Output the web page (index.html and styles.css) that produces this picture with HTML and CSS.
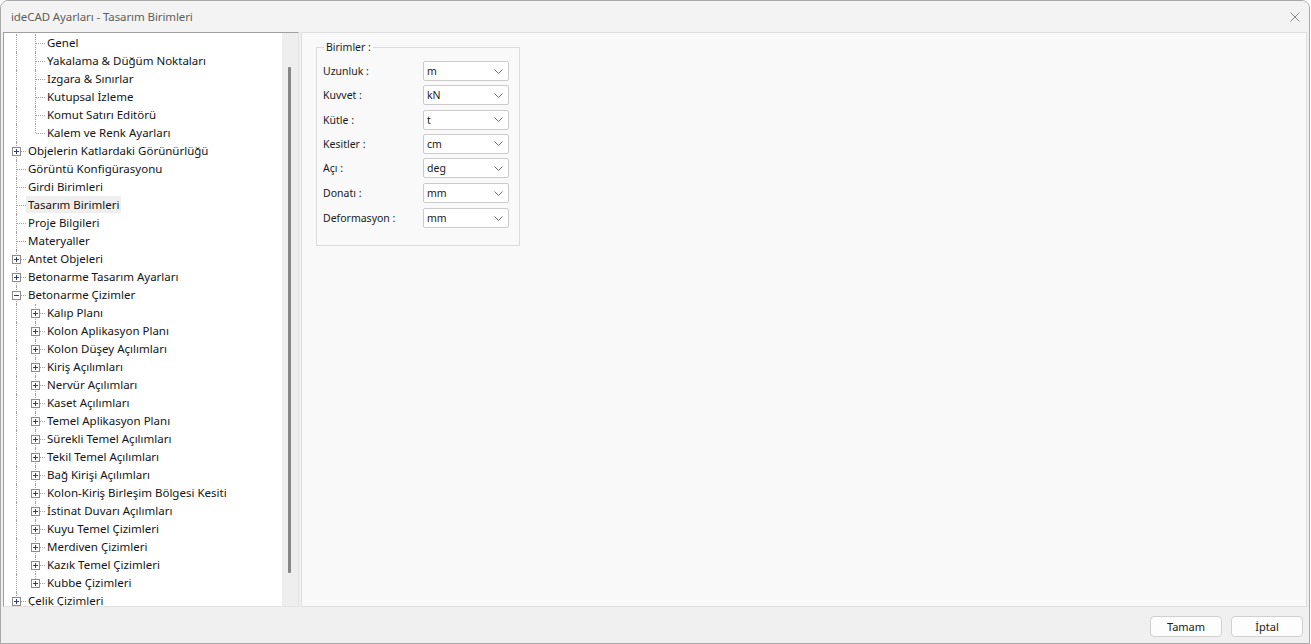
FILE: index.html
```html
<!DOCTYPE html>
<html lang="tr">
<head>
<meta charset="utf-8">
<title>ideCAD Ayarları - Tasarım Birimleri</title>
<link rel="stylesheet" href="styles.css">
</head>
<body>
<div class="window">
  <div class="titlebar">
    <span class="title">ideCAD Ayarları - Tasarım Birimleri</span>
    <svg class="close" width="10" height="10" viewBox="0 0 10 10"><path d="M0.5 0.5 L9.5 9.5 M9.5 0.5 L0.5 9.5" stroke="#8a8a8a" stroke-width="1"/></svg>
  </div>
  <div class="main">
    <div class="treepanel">
      <div class="tree">
        <div class="row"><span class="g v"></span><span class="g t"></span><span class="lbl">Genel</span></div>
        <div class="row"><span class="g v"></span><span class="g t"></span><span class="lbl">Yakalama &amp; Düğüm Noktaları</span></div>
        <div class="row"><span class="g v"></span><span class="g t"></span><span class="lbl">Izgara &amp; Sınırlar</span></div>
        <div class="row"><span class="g v"></span><span class="g t"></span><span class="lbl">Kutupsal İzleme</span></div>
        <div class="row"><span class="g v"></span><span class="g t"></span><span class="lbl">Komut Satırı Editörü</span></div>
        <div class="row"><span class="g v"></span><span class="g t end"></span><span class="lbl">Kalem ve Renk Ayarları</span></div>
        <div class="row"><span class="g t"><i class="box plus"></i></span><span class="lbl">Objelerin Katlardaki Görünürlüğü</span></div>
        <div class="row"><span class="g t"></span><span class="lbl">Görüntü Konfigürasyonu</span></div>
        <div class="row"><span class="g t"></span><span class="lbl">Girdi Birimleri</span></div>
        <div class="row"><span class="g t"></span><span class="lbl sel">Tasarım Birimleri</span></div>
        <div class="row"><span class="g t"></span><span class="lbl">Proje Bilgileri</span></div>
        <div class="row"><span class="g t"></span><span class="lbl">Materyaller</span></div>
        <div class="row"><span class="g t"><i class="box plus"></i></span><span class="lbl">Antet Objeleri</span></div>
        <div class="row"><span class="g t"><i class="box plus"></i></span><span class="lbl">Betonarme Tasarım Ayarları</span></div>
        <div class="row"><span class="g t"><i class="box"></i></span><span class="lbl">Betonarme Çizimler</span></div>
        <div class="row"><span class="g v"></span><span class="g t"><i class="box plus"></i></span><span class="lbl">Kalıp Planı</span></div>
        <div class="row"><span class="g v"></span><span class="g t"><i class="box plus"></i></span><span class="lbl">Kolon Aplikasyon Planı</span></div>
        <div class="row"><span class="g v"></span><span class="g t"><i class="box plus"></i></span><span class="lbl">Kolon Düşey Açılımları</span></div>
        <div class="row"><span class="g v"></span><span class="g t"><i class="box plus"></i></span><span class="lbl">Kiriş Açılımları</span></div>
        <div class="row"><span class="g v"></span><span class="g t"><i class="box plus"></i></span><span class="lbl">Nervür Açılımları</span></div>
        <div class="row"><span class="g v"></span><span class="g t"><i class="box plus"></i></span><span class="lbl">Kaset Açılımları</span></div>
        <div class="row"><span class="g v"></span><span class="g t"><i class="box plus"></i></span><span class="lbl">Temel Aplikasyon Planı</span></div>
        <div class="row"><span class="g v"></span><span class="g t"><i class="box plus"></i></span><span class="lbl">Sürekli Temel Açılımları</span></div>
        <div class="row"><span class="g v"></span><span class="g t"><i class="box plus"></i></span><span class="lbl">Tekil Temel Açılımları</span></div>
        <div class="row"><span class="g v"></span><span class="g t"><i class="box plus"></i></span><span class="lbl">Bağ Kirişi Açılımları</span></div>
        <div class="row"><span class="g v"></span><span class="g t"><i class="box plus"></i></span><span class="lbl">Kolon-Kiriş Birleşim Bölgesi Kesiti</span></div>
        <div class="row"><span class="g v"></span><span class="g t"><i class="box plus"></i></span><span class="lbl">İstinat Duvarı Açılımları</span></div>
        <div class="row"><span class="g v"></span><span class="g t"><i class="box plus"></i></span><span class="lbl">Kuyu Temel Çizimleri</span></div>
        <div class="row"><span class="g v"></span><span class="g t"><i class="box plus"></i></span><span class="lbl">Merdiven Çizimleri</span></div>
        <div class="row"><span class="g v"></span><span class="g t"><i class="box plus"></i></span><span class="lbl">Kazık Temel Çizimleri</span></div>
        <div class="row"><span class="g v"></span><span class="g t end"><i class="box plus"></i></span><span class="lbl">Kubbe Çizimleri</span></div>
        <div class="row"><span class="g t"><i class="box plus"></i></span><span class="lbl">Çelik Çizimleri</span></div>
      </div>
      <div class="vscroll"><div class="thumb"></div></div>
    </div>
    <div class="content">
      <fieldset class="group">
        <legend>Birimler :</legend>
        <div class="frow"><span class="flabel">Uzunluk :</span><div class="combo"><span>m</span><svg class="chev" width="9" height="5" viewBox="0 0 9 5"><path d="M0.5 0.5 L4.5 4.5 L8.5 0.5" fill="none" stroke="#6a6a6a" stroke-width="1"/></svg></div></div>
        <div class="frow"><span class="flabel">Kuvvet :</span><div class="combo"><span>kN</span><svg class="chev" width="9" height="5" viewBox="0 0 9 5"><path d="M0.5 0.5 L4.5 4.5 L8.5 0.5" fill="none" stroke="#6a6a6a" stroke-width="1"/></svg></div></div>
        <div class="frow"><span class="flabel">Kütle :</span><div class="combo"><span>t</span><svg class="chev" width="9" height="5" viewBox="0 0 9 5"><path d="M0.5 0.5 L4.5 4.5 L8.5 0.5" fill="none" stroke="#6a6a6a" stroke-width="1"/></svg></div></div>
        <div class="frow"><span class="flabel">Kesitler :</span><div class="combo"><span>cm</span><svg class="chev" width="9" height="5" viewBox="0 0 9 5"><path d="M0.5 0.5 L4.5 4.5 L8.5 0.5" fill="none" stroke="#6a6a6a" stroke-width="1"/></svg></div></div>
        <div class="frow"><span class="flabel">Açı :</span><div class="combo"><span>deg</span><svg class="chev" width="9" height="5" viewBox="0 0 9 5"><path d="M0.5 0.5 L4.5 4.5 L8.5 0.5" fill="none" stroke="#6a6a6a" stroke-width="1"/></svg></div></div>
        <div class="frow wide"><span class="flabel">Donatı :</span><div class="combo"><span>mm</span><svg class="chev" width="9" height="5" viewBox="0 0 9 5"><path d="M0.5 0.5 L4.5 4.5 L8.5 0.5" fill="none" stroke="#6a6a6a" stroke-width="1"/></svg></div></div>
        <div class="frow wide"><span class="flabel">Deformasyon :</span><div class="combo"><span>mm</span><svg class="chev" width="9" height="5" viewBox="0 0 9 5"><path d="M0.5 0.5 L4.5 4.5 L8.5 0.5" fill="none" stroke="#6a6a6a" stroke-width="1"/></svg></div></div>
      </fieldset>
    </div>
  </div>
  <div class="footer">
    <button class="btn">Tamam</button>
    <button class="btn">İptal</button>
  </div>
</div>
</body>
</html>
```
FILE: styles.css
```css
* { box-sizing: border-box; }
html, body { margin: 0; padding: 0; background: #ffffff; }
body { width: 1311px; height: 644px; overflow: hidden; font-family: "Noto Sans", "Open Sans", sans-serif; }

.window {
  width: 1310px;
  height: 644px;
  border: 1px solid #a9a9a9;
  border-radius: 8px 8px 0 0;
  background: #f0f0f0;
  display: flex;
  flex-direction: column;
  overflow: hidden;
}

.titlebar {
  height: 31px;
  flex: none;
  background: #f3f3f3;
  display: flex;
  align-items: center;
  justify-content: space-between;
  padding: 0 9px 0 10px;
}
.title { font-size: 11.5px; color: #5e5e5e; letter-spacing: -0.1px; }
.close { display: block; }

.main {
  height: 575px;
  flex: none;
  display: flex;
  gap: 2px;
  padding: 0 2px 0 2px;
}

.treepanel {
  width: 296px;
  flex: none;
  display: flex;
  border-top: 1px solid #a0a0a0;
  border-left: 1px solid #a0a0a0;
  border-right: 1px solid #e2e2e2;
  border-bottom: 1px solid #e2e2e2;
  background: #ffffff;
}
.tree {
  flex: 1;
  background: #ffffff;
  padding: 1px 0 0 3px;
  overflow: hidden;
  font-size: 11.5px;
  color: #141414;
}
.row { display: flex; height: 18px; align-items: stretch; white-space: nowrap; }
.g { width: 19px; flex: none; position: relative; }
.g.v::before, .g.t::before {
  content: "";
  position: absolute;
  left: 9px;
  top: 0;
  bottom: 0;
  border-left: 1px dotted #a0a0a0;
}
.g.t.end::before { bottom: 9px; }
.g.t::after {
  content: "";
  position: absolute;
  left: 10px;
  right: 0;
  top: 9px;
  border-top: 1px dotted #a0a0a0;
}
.box {
  position: absolute;
  left: 5px;
  top: 5px;
  width: 9px;
  height: 9px;
  border: 1px solid #8c8c8c;
  background: #ffffff;
  z-index: 1;
}
.box::before {
  content: "";
  position: absolute;
  left: 1px;
  top: 3px;
  width: 5px;
  height: 1px;
  background: #2b3f73;
}
.box.plus::after {
  content: "";
  position: absolute;
  left: 3px;
  top: 1px;
  width: 1px;
  height: 5px;
  background: #2b3f73;
}
.lbl { padding: 0 2px; line-height: 17px; height: 17px; }
.lbl.sel { background: #efefef; }

.vscroll {
  width: 16px;
  flex: none;
  background: #eeeeee;
  position: relative;
  padding: 34px 0 0 6px;
}
.thumb { width: 3px; height: 506px; background: #868686; border-radius: 1px; }

.content {
  flex: 1;
  background: #f9f9f9;
  border: 1px solid #dedede;
  padding: 7px 0 0 14px;
}

.group {
  width: 203px;
  margin: 0;
  border: 1px solid #dcdcdc;
  padding: 7px 10px 17px 6px;
  display: flex;
  flex-direction: column;
  gap: 4.3px;
  font-size: 10.5px;
  color: #1a1a1a;
}
.group legend { padding: 0 2px; margin-left: 1px; font-size: 10.5px; }
.frow { display: flex; align-items: center; height: 20px; }
.frow.wide { margin-top: 0.7px; }
.flabel { width: 100px; flex: none; }
.combo {
  width: 86px;
  height: 20px;
  background: #ffffff;
  border: 1px solid #cbcbcb;
  border-radius: 2px;
  display: flex;
  align-items: center;
  justify-content: space-between;
  padding: 0 5px 0 3px;
}
.chev { display: block; }

.footer {
  flex: 1;
  display: flex;
  justify-content: flex-end;
  align-items: flex-start;
  gap: 9px;
  padding: 9px 6px 0 0;
}
.btn {
  width: 72px;
  height: 21px;
  border: 1px solid #d0d0d0;
  border-radius: 4px;
  background: #fdfdfd;
  font-family: "Noto Sans", "Open Sans", sans-serif;
  font-size: 11px;
  color: #1a1a1a;
  padding: 0;
  margin: 0;
}
```
